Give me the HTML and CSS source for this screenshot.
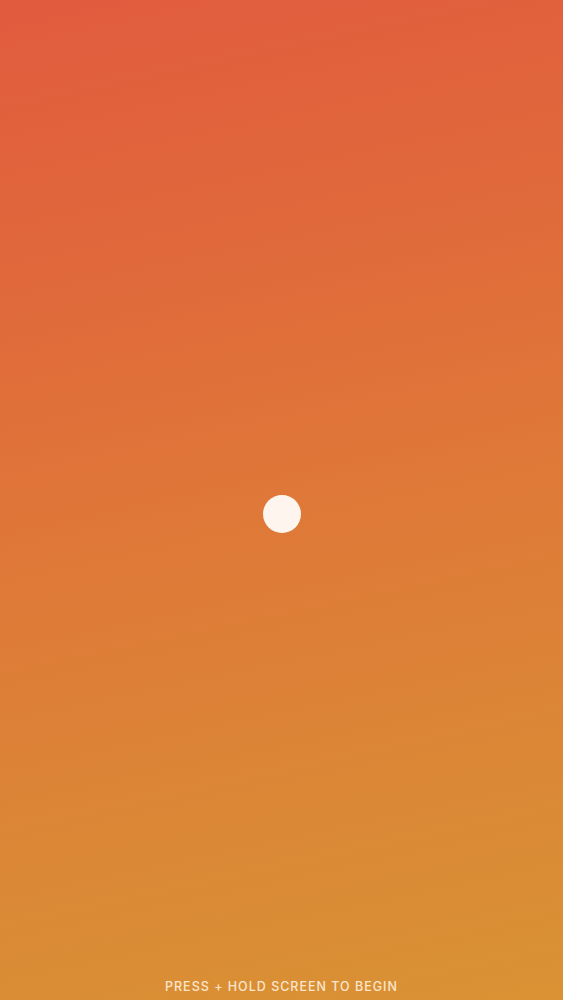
FILE: index.html
```html
<!DOCTYPE html>
<html lang="en">
<head>
<meta charset="utf-8">
<title>Press + Hold</title>
<link rel="stylesheet" href="styles.css">
</head>
<body>
<main class="screen">
  <div class="center">
    <div class="dot"></div>
  </div>
  <p class="hint">PRESS + HOLD SCREEN TO BEGIN</p>
</main>
</body>
</html>
```
FILE: styles.css
```css
html, body {
  margin: 0;
  padding: 0;
  height: 100%;
}
.screen {
  height: 1000px;
  display: flex;
  flex-direction: column;
  background: linear-gradient(168deg, #e15b3e 0%, #e0683b 25%, #df7838 50%, #db8636 75%, #d99234 100%);
  font-family: Inter, "Noto Sans", sans-serif;
}
.center {
  flex: 1;
  display: flex;
  align-items: center;
  justify-content: center;
  padding-top: 49px;
}
.dot {
  width: 38px;
  height: 38px;
  border-radius: 50%;
  background: #fdf5ee;
}
.hint {
  margin: 0;
  padding-bottom: 5px;
  text-align: center;
  color: #fbe6cc;
  font-size: 12.5px;
  font-weight: 500;
  letter-spacing: 1px;
  line-height: 16px;
}
```
